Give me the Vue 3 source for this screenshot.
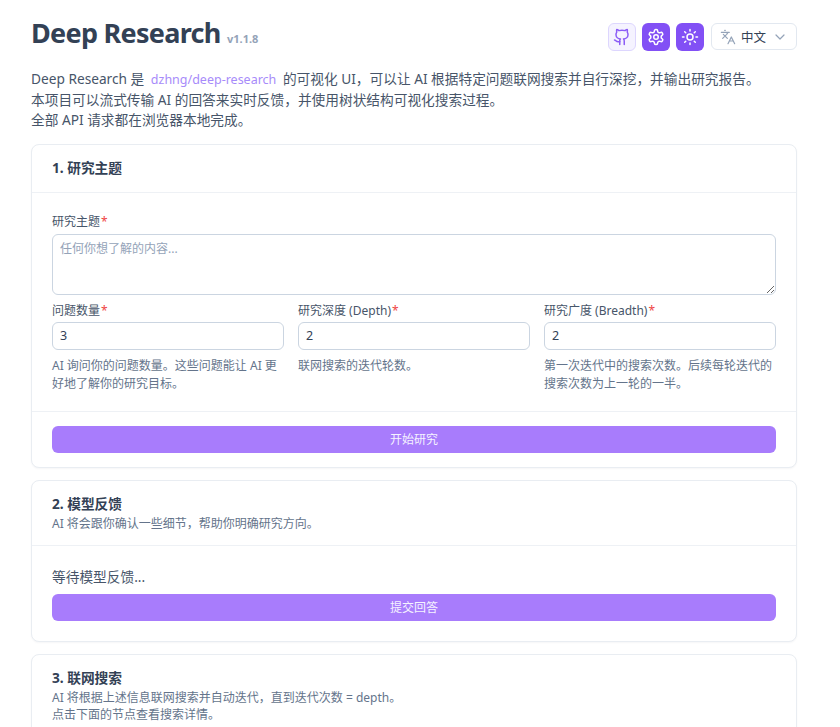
<template>
  <div class="page">
    <header class="top">
      <h1 class="title">Deep Research <span class="version">v1.1.8</span></h1>
      <div class="actions">
        <button class="icon-btn soft" aria-label="GitHub">
          <svg viewBox="0 0 24 24" class="ico"><path d="M15 22v-4a4.8 4.8 0 0 0-1-3.5c3 0 6-2 6-5.5.08-1.25-.27-2.48-1-3.5.28-1.15.28-2.35 0-3.5 0 0-1 0-3 1.5-2.64-.5-5.36-.5-8 0C6 2 5 2 5 2c-.3 1.15-.3 2.35 0 3.5A5.4 5.4 0 0 0 4 9c0 3.5 3 5.5 6 5.5-.39.49-.68 1.05-.85 1.65-.17.6-.22 1.23-.15 1.85v4" /><path d="M9 18c-4.51 2-5-2-7-2" /></svg>
        </button>
        <button class="icon-btn solid" aria-label="设置">
          <svg viewBox="0 0 24 24" class="ico"><path d="M12.22 2h-.44a2 2 0 0 0-2 2v.18a2 2 0 0 1-1 1.73l-.43.25a2 2 0 0 1-2 0l-.15-.08a2 2 0 0 0-2.73.73l-.22.38a2 2 0 0 0 .73 2.73l.15.1a2 2 0 0 1 1 1.72v.51a2 2 0 0 1-1 1.74l-.15.09a2 2 0 0 0-.73 2.73l.22.38a2 2 0 0 0 2.73.73l.15-.08a2 2 0 0 1 2 0l.43.25a2 2 0 0 1 1 1.73V20a2 2 0 0 0 2 2h.44a2 2 0 0 0 2-2v-.18a2 2 0 0 1 1-1.73l.43-.25a2 2 0 0 1 2 0l.15.08a2 2 0 0 0 2.73-.73l.22-.39a2 2 0 0 0-.73-2.73l-.15-.08a2 2 0 0 1-1-1.74v-.5a2 2 0 0 1 1-1.74l.15-.09a2 2 0 0 0 .73-2.73l-.22-.38a2 2 0 0 0-2.73-.73l-.15.08a2 2 0 0 1-2 0l-.43-.25a2 2 0 0 1-1-1.73V4a2 2 0 0 0-2-2z" /><circle cx="12" cy="12" r="3" /></svg>
        </button>
        <button class="icon-btn solid" aria-label="主题">
          <svg viewBox="0 0 24 24" class="ico"><circle cx="12" cy="12" r="4" /><path d="M12 2v2M12 20v2M4.93 4.93l1.41 1.41M17.66 17.66l1.41 1.41M2 12h2M20 12h2M6.34 17.66l-1.41 1.41M19.07 4.93l-1.41 1.41" /></svg>
        </button>
        <div class="lang">
          <svg viewBox="0 0 24 24" class="lang-ico"><path d="M5 8l6 6M4 14l6-6 2-3M2 5h12M7 2h1M22 22l-5-10-5 10M14 18h6" /></svg>
          <span>中文</span>
          <svg viewBox="0 0 24 24" class="chev"><path d="M6 9l6 6 6-6" /></svg>
        </div>
      </div>
    </header>

    <p class="intro">
      Deep Research 是 <a class="link">dzhng/deep-research</a> 的可视化 UI，可以让 AI 根据特定问题联网搜索并自行深挖，并输出研究报告。<br />
      本项目可以流式传输 AI 的回答来实时反馈，并使用树状结构可视化搜索过程。<br />
      全部 API 请求都在浏览器本地完成。
    </p>

    <section class="card">
      <div class="card-head one-line">
        <h2>1. 研究主题</h2>
      </div>
      <div class="card-body form">
        <label class="lbl">研究主题<span class="req">*</span></label>
        <textarea class="area" rows="3" placeholder="任何你想了解的内容..."></textarea>
        <div class="cols">
          <div v-for="f in fields" :key="f.label" class="col">
            <label class="lbl">{{ f.label }}<span class="req">*</span></label>
            <input class="num" :value="f.value" />
            <p class="help">{{ f.help }}</p>
          </div>
        </div>
      </div>
      <div class="card-foot">
        <button class="primary">开始研究</button>
      </div>
    </section>

    <section class="card">
      <div class="card-head">
        <h2>2. 模型反馈</h2>
        <p class="sub">AI 将会跟你确认一些细节，帮助你明确研究方向。</p>
      </div>
      <div class="card-body wait-body">
        <p class="wait">等待模型反馈...</p>
        <button class="primary">提交回答</button>
      </div>
    </section>

    <section class="card">
      <div class="card-head">
        <h2>3. 联网搜索</h2>
        <p class="sub">AI 将根据上述信息联网搜索并自动迭代，直到迭代次数 = depth。<br />点击下面的节点查看搜索详情。</p>
      </div>
      <div class="card-body">
        <p class="wait">等待开始...</p>
      </div>
    </section>
  </div>
</template>

<script setup>
const fields = [
  { label: '问题数量', value: '3', help: 'AI 询问你的问题数量。这些问题能让 AI 更好地了解你的研究目标。' },
  { label: '研究深度 (Depth)', value: '2', help: '联网搜索的迭代轮数。' },
  { label: '研究广度 (Breadth)', value: '2', help: '第一次迭代中的搜索次数。后续每轮迭代的搜索次数为上一轮的一半。' },
]
</script>

<style>
html, body {
  height: 727px;
  overflow: hidden;
  background: #fff;
}
</style>

<style scoped>
.page {
  box-sizing: border-box;
  width: 840px;
  padding: 14px 43px 0 31px;
  font-family: "Noto Sans", "Noto Sans CJK SC", sans-serif;
  font-size: 13.7px;
  color: #475569;
}
.top {
  display: flex;
  align-items: center;
  justify-content: space-between;
  height: 38px;
}
.title {
  margin: 6px 0 0;
  font-size: 27px;
  line-height: 38px;
  font-weight: 700;
  letter-spacing: -0.7px;
  color: #334155;
}
.version {
  font-size: 11px;
  font-weight: 700;
  letter-spacing: 0;
  color: #94a3b8;
}
.actions {
  display: flex;
  align-items: center;
  gap: 6px;
  margin-top: 7px;
}
.icon-btn {
  box-sizing: border-box;
  width: 28px;
  height: 28px;
  padding: 0;
  border-radius: 6px;
  display: flex;
  align-items: center;
  justify-content: center;
}
.soft {
  background: #f5f3ff;
  border: 1px solid #ddd6fe;
  color: #8b5cf6;
}
.solid {
  background: #8250f5;
  border: none;
  color: #fff;
}
.ico {
  width: 18px;
  height: 18px;
  fill: none;
  stroke: currentColor;
  stroke-width: 2;
  stroke-linecap: round;
  stroke-linejoin: round;
}
.lang {
  box-sizing: border-box;
  width: 86px;
  height: 27px;
  margin-left: 1px;
  border: 1px solid #e2e8f0;
  border-radius: 6px;
  display: flex;
  align-items: center;
  padding: 0 8px;
  gap: 5px;
  font-size: 12.5px;
  color: #334155;
}
.lang-ico {
  width: 16px;
  height: 16px;
  fill: none;
  stroke: #94a3b8;
  stroke-width: 1.8;
  stroke-linecap: round;
  stroke-linejoin: round;
}
.chev {
  width: 16px;
  height: 16px;
  margin-left: auto;
  fill: none;
  stroke: #94a3b8;
  stroke-width: 1.8;
  stroke-linecap: round;
  stroke-linejoin: round;
}
.intro {
  margin: 17px 0 13px;
  line-height: 20.5px;
  color: #475569;
}
.link {
  color: #a78bfa;
  font-size: 12.5px;
  line-height: 1;
  margin: 0 3px;
}
.card {
  box-sizing: border-box;
  width: 766px;
  border: 1px solid #e9edf2;
  border-radius: 8px;
  margin-bottom: 12px;
  background: #fff;
  box-shadow: 0 1px 2px rgba(15, 23, 42, 0.04);
}
.card-head {
  padding: 13px 20px 13px;
  border-bottom: 1px solid #eef1f5;
}
.one-line {
  padding: 13px 20px 14px;
}
h2 {
  margin: 0;
  font-size: 13.7px;
  line-height: 20px;
  font-weight: 700;
  color: #334155;
}
.sub {
  margin: 1px 0 0;
  font-size: 12px;
  line-height: 17px;
  color: #64748b;
}
.card-body {
  padding: 20px;
}
.form {
  padding-top: 20px;
  padding-bottom: 18px;
}
.lbl {
  display: block;
  font-size: 12px;
  line-height: 18px;
  color: #475569;
}
.req {
  color: #ef4444;
  margin-left: 1px;
}
.area {
  display: block;
  box-sizing: border-box;
  width: 100%;
  height: 61px;
  margin-top: 3px;
  padding: 5px 7px;
  border: 1px solid #cbd5e1;
  border-radius: 6px;
  font: 12px/18px "Noto Sans", "Noto Sans CJK SC", sans-serif;
  color: #334155;
  outline: none;
}
.area::placeholder {
  color: #94a3b8;
}
.cols {
  display: grid;
  grid-template-columns: repeat(3, 1fr);
  gap: 14px;
  margin-top: 7px;
}
.num {
  display: block;
  box-sizing: border-box;
  width: 100%;
  height: 28px;
  margin-top: 2px;
  padding: 0 7px;
  border: 1px solid #cbd5e1;
  border-radius: 6px;
  font: 12.5px "Noto Sans", "Noto Sans CJK SC", sans-serif;
  color: #334155;
  outline: none;
}
.help {
  margin: 7px 0 0;
  font-size: 12px;
  line-height: 18px;
  color: #64748b;
}
.card-foot {
  padding: 14px 20px;
  border-top: 1px solid #eef1f5;
}
.primary {
  display: block;
  width: 100%;
  height: 27px;
  padding: 0;
  border: none;
  border-radius: 6px;
  background: #a87cfc;
  color: #f5f3ff;
  font: 12px "Noto Sans", "Noto Sans CJK SC", sans-serif;
}
.wait-body {
  padding-top: 21px;
}
.wait {
  margin: 0 0 7px;
  font-size: 13.7px;
  line-height: 20px;
  color: #475569;
}
</style>
